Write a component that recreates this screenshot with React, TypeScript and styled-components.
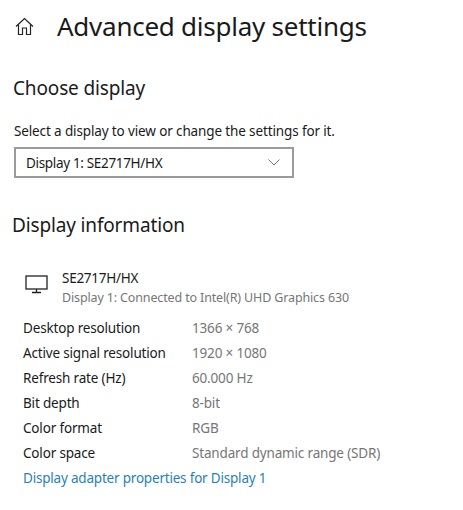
import React from "react";
import styled, { createGlobalStyle } from "styled-components";

const Global = createGlobalStyle`
  html, body { margin: 0; padding: 0; background: #fff; }
  body { font-family: "Noto Sans", "Open Sans", "Liberation Sans", sans-serif; }
`;
const Page = styled.div`
  width: 463px; height: 510px; overflow: hidden; background: #fff; color: #1a1a1a;
  display: flex; flex-direction: column;
`;
const Header = styled.header`
  display: flex; align-items: center; height: 38px; margin-top: 7px; padding-left: 15px;
`;
const HomeIcon = styled.svg`
  width: 19px; height: 19px; margin-right: 23px; flex: none; margin-top: 1px;
`;
const Title = styled.h1`
  margin: 0; font-size: 26px; font-weight: 400; line-height: 38px; letter-spacing: -0.25px; white-space: nowrap;
`;
const Heading = styled.h2<{ $left: number; $top: number }>`
  margin: ${p => p.$top}px 0 0 ${p => p.$left}px;
  font-size: 19px; font-weight: 400; line-height: 28px; letter-spacing: -0.15px;
`;
const Hint = styled.p`
  margin: 19px 0 0 14px; font-size: 13.5px; line-height: 20px; letter-spacing: -0.13px;
`;
const Select = styled.div`
  box-sizing: border-box; width: 280px; height: 31px; margin: 6px 0 0 14px; padding: 0 12px 0 10px;
  border: 2px solid #9b9b9b; display: flex; align-items: center; justify-content: space-between;
  font-size: 13.5px; letter-spacing: -0.33px;
`;
const Chevron = styled.svg`
  width: 12px; height: 7px; flex: none;
`;
const Device = styled.div`
  display: flex; margin: 30px 0 0 25px; align-items: flex-start;
`;
const MonitorIcon = styled.svg`
  width: 24px; height: 20px; flex: none; margin: 6px 13px 0 0;
`;
const DeviceText = styled.div`display: flex; flex-direction: column;`;
const DeviceName = styled.div`font-size: 13.5px; line-height: 19px; letter-spacing: -0.27px;`;
const DeviceSub = styled.div`font-size: 12.5px; line-height: 19px; color: #767676; letter-spacing: -0.14px;`;
const Info = styled.dl`
  display: grid; grid-template-columns: 169px 1fr; grid-auto-rows: 25px; margin: 8px 0 0 23px;
  font-size: 13.5px; letter-spacing: -0.17px; align-items: center;
`;
const Key = styled.dt`margin: 0;`;
const Val = styled.dd`margin: 0; color: #767676;`;
const AdapterLink = styled.a`
  margin: 1px 0 0 23px; font-size: 13.5px; line-height: 25px; color: #2a7fb8; letter-spacing: -0.2px; text-decoration: none;
`;

const rows: [string, string][] = [
  ["Desktop resolution", "1366 × 768"],
  ["Active signal resolution", "1920 × 1080"],
  ["Refresh rate (Hz)", "60.000 Hz"],
  ["Bit depth", "8-bit"],
  ["Color format", "RGB"],
  ["Color space", "Standard dynamic range (SDR)"],
];

export default function App() {
  return (
    <Page>
      <Global />
      <Header>
        <HomeIcon viewBox="0 0 19 19" fill="none" stroke="#222" strokeWidth="1.2">
          <path d="M1 9.5 9.5 1.5 18 9.5" />
          <path d="M3.5 7.5V17.5H7.5V11H11.5V17.5H15.5V7.5" />
        </HomeIcon>
        <Title>Advanced display settings</Title>
      </Header>
      <Heading $left={13} $top={29}>Choose display</Heading>
      <Hint>Select a display to view or change the settings for it.</Hint>
      <Select>
        <span>Display 1: SE2717H/HX</span>
        <Chevron viewBox="0 0 12 7" fill="none" stroke="#777" strokeWidth="1">
          <path d="M.5.5 6 6 11.5.5" />
        </Chevron>
      </Select>
      <Heading $left={12} $top={33}>Display information</Heading>
      <Device>
        <MonitorIcon viewBox="0 0 24 20" fill="none" stroke="#222" strokeWidth="1.3">
          <rect x="1" y="1" width="21" height="13" />
          <path d="M11.5 14v3M7 17.5h9" />
        </MonitorIcon>
        <DeviceText>
          <DeviceName>SE2717H/HX</DeviceName>
          <DeviceSub>Display 1: Connected to Intel(R) UHD Graphics 630</DeviceSub>
        </DeviceText>
      </Device>
      <Info>
        {rows.map(([k, v]) => (
          <React.Fragment key={k}>
            <Key>{k}</Key>
            <Val>{v}</Val>
          </React.Fragment>
        ))}
      </Info>
      <AdapterLink href="#">Display adapter properties for Display 1</AdapterLink>
    </Page>
  );
}
